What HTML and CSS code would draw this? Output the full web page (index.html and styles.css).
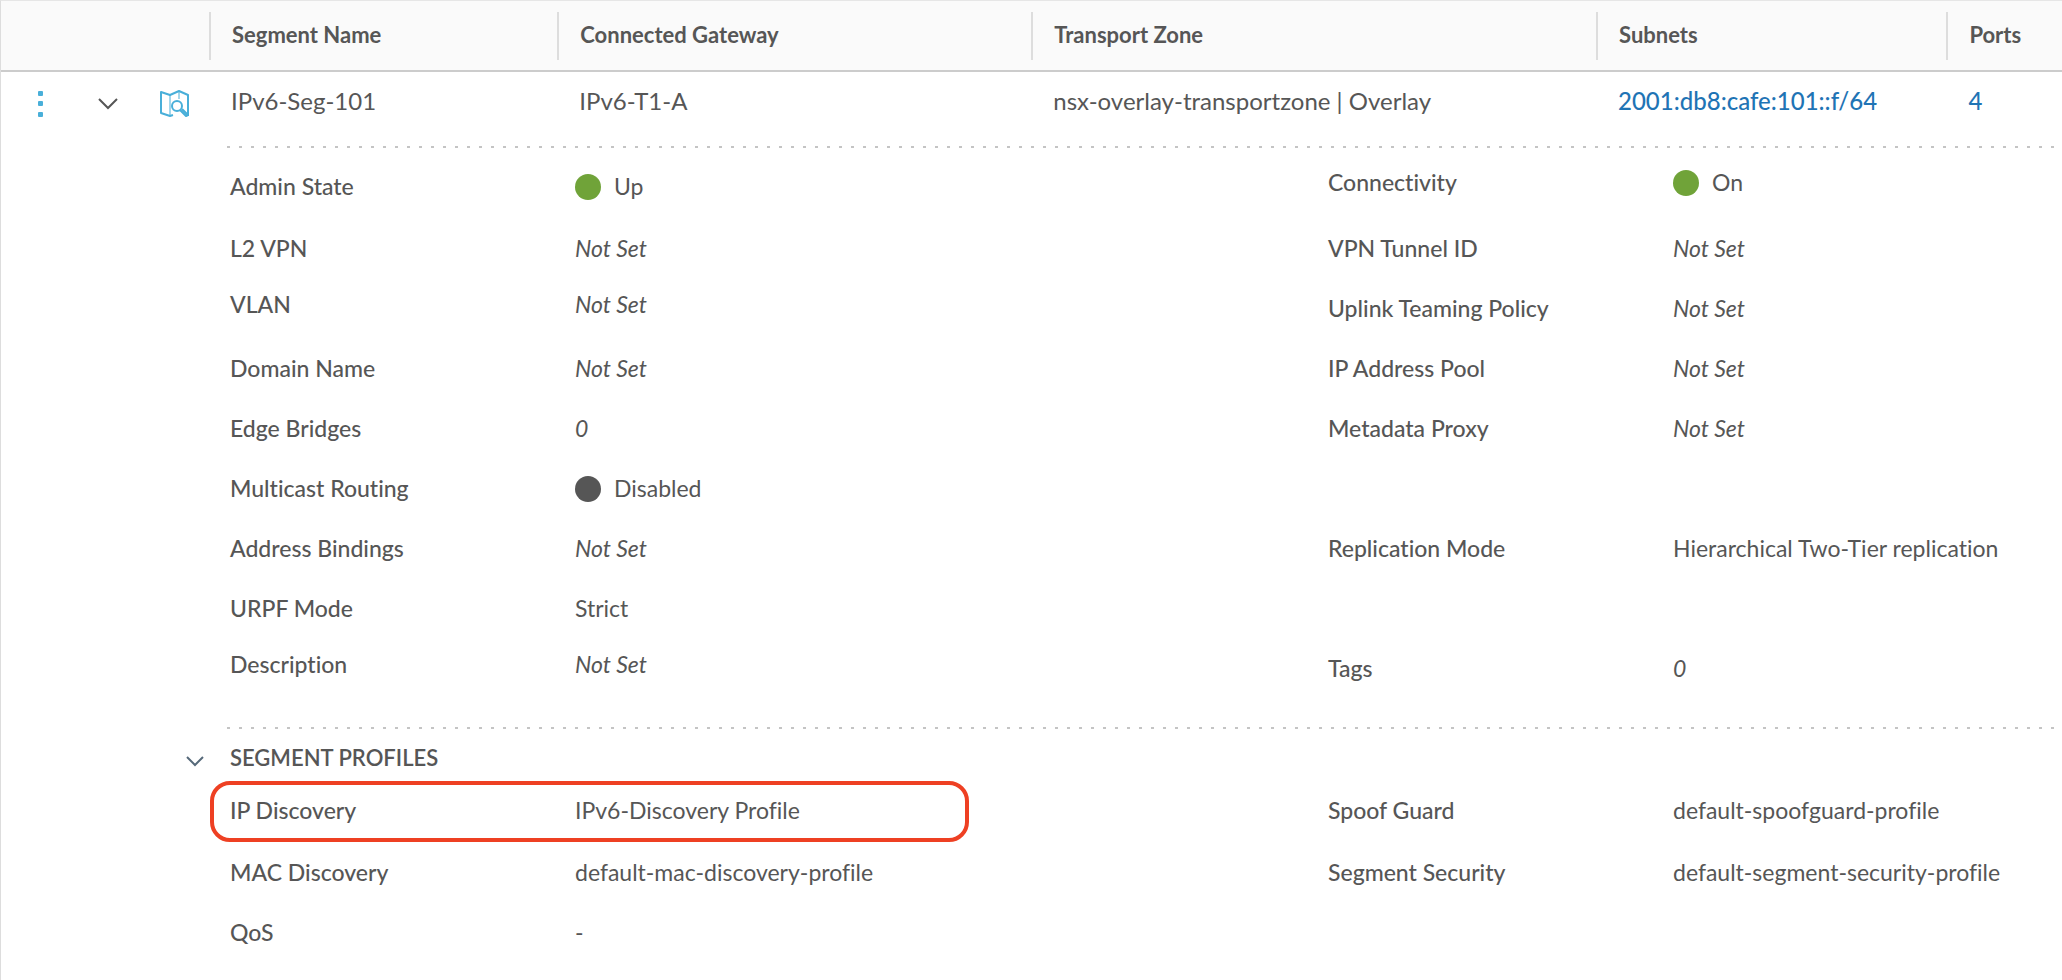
FILE: index.html
```html
<!DOCTYPE html>
<html lang="en">
<head>
    <meta charset="UTF-8">
    <meta name="viewport" content="width=device-width, initial-scale=1.0">
    <title>Segments</title>
    <link rel="stylesheet" href="styles.css">
</head>
<body>
    <table class="segments">
        <colgroup>
            <col class="col-actions">
            <col class="col-name">
            <col class="col-gateway">
            <col class="col-zone">
            <col class="col-subnets">
            <col class="col-ports">
        </colgroup>
        <thead>
            <tr>
                <td></td>
                <th scope="col"><div class="head">Segment Name</div></th>
                <th scope="col"><div class="head">Connected Gateway</div></th>
                <th scope="col"><div class="head">Transport Zone</div></th>
                <th scope="col"><div class="head">Subnets</div></th>
                <th scope="col"><div class="head">Ports</div></th>
            </tr>
        </thead>
        <tbody>
            <tr class="segment">
                <td>
                    <div class="actions">
                        <button type="button" class="icon-btn" aria-label="Actions">
                            <svg width="8" height="28" viewBox="0 0 8 28" fill="#49afd9">
                                <rect x="2" y="1" width="5" height="5" rx="1"/>
                                <rect x="2" y="11" width="5" height="5" rx="1"/>
                                <rect x="2" y="22" width="5" height="5" rx="1"/>
                            </svg>
                        </button>
                        <button type="button" class="icon-btn" aria-label="Collapse segment">
                            <svg width="20" height="14" viewBox="0 0 20 14" fill="none" stroke="#565656" stroke-width="2">
                                <path d="M1 2l9 9 9-9"/>
                            </svg>
                        </button>
                        <svg class="map" width="30" height="28" viewBox="0 0 30 28" fill="none" stroke="#49afd9" stroke-width="2" stroke-linejoin="round">
                            <path d="M13 25l-3 1-9-3V2l9 3 9-4 9 4v21"/>
                            <path d="M10 5v21M19 1v8" stroke-width="1"/>
                            <circle cx="17" cy="16" r="5"/>
                            <path d="M20 20l6 6 2-1-6-6"/>
                        </svg>
                    </div>
                </td>
                <td>IPv6-Seg-101</td>
                <td>IPv6-T1-A</td>
                <td>nsx-overlay-transportzone | Overlay</td>
                <td><a href="#subnets">2001:db8:cafe:101::f/64</a></td>
                <td><a href="#ports">4</a></td>
            </tr>
            <tr>
                <td class="details" colspan="6">
                    <div class="divider"></div>
                    <dl class="settings">
                        <div class="row">
                            <dt>Admin State</dt>
                            <dd><span class="dot green"></span>Up</dd>
                            <dt class="upper">Connectivity</dt>
                            <dd class="upper"><span class="dot green"></span>On</dd>
                        </div>
                        <div class="row">
                            <dt>L2 VPN</dt>
                            <dd class="unset">Not Set</dd>
                            <dt>VPN Tunnel ID</dt>
                            <dd class="unset">Not Set</dd>
                        </div>
                        <div class="row">
                            <dt class="upper">VLAN</dt>
                            <dd class="unset upper">Not Set</dd>
                            <dt>Uplink Teaming Policy</dt>
                            <dd class="unset">Not Set</dd>
                        </div>
                        <div class="row">
                            <dt>Domain Name</dt>
                            <dd class="unset">Not Set</dd>
                            <dt>IP Address Pool</dt>
                            <dd class="unset">Not Set</dd>
                        </div>
                        <div class="row">
                            <dt>Edge Bridges</dt>
                            <dd class="unset">0</dd>
                            <dt>Metadata Proxy</dt>
                            <dd class="unset">Not Set</dd>
                        </div>
                        <div class="row">
                            <dt>Multicast Routing</dt>
                            <dd><span class="dot grey"></span>Disabled</dd>
                        </div>
                        <div class="row">
                            <dt>Address Bindings</dt>
                            <dd class="unset">Not Set</dd>
                            <dt>Replication Mode</dt>
                            <dd>Hierarchical Two-Tier replication</dd>
                        </div>
                        <div class="row">
                            <dt>URPF Mode</dt>
                            <dd>Strict</dd>
                        </div>
                        <div class="row">
                            <dt class="upper">Description</dt>
                            <dd class="unset upper">Not Set</dd>
                            <dt>Tags</dt>
                            <dd class="unset">0</dd>
                        </div>
                    </dl>
                    <div class="divider"></div>
                    <div class="section-title">
                        <button type="button" class="icon-btn" aria-label="Collapse segment profiles">
                            <svg width="18" height="12" viewBox="0 0 18 12" fill="none" stroke="#56697a" stroke-width="2">
                                <path d="M1 2l8 8 8-8"/>
                            </svg>
                        </button>
                        <h2>SEGMENT PROFILES</h2>
                    </div>
                    <dl class="profiles">
                        <div class="row highlighted">
                            <dt>IP Discovery</dt>
                            <dd>IPv6-Discovery Profile</dd>
                            <dt>Spoof Guard</dt>
                            <dd>default-spoofguard-profile</dd>
                        </div>
                        <div class="row">
                            <dt>MAC Discovery</dt>
                            <dd>default-mac-discovery-profile</dd>
                            <dt>Segment Security</dt>
                            <dd>default-segment-security-profile</dd>
                        </div>
                        <div class="row">
                            <dt>QoS</dt>
                            <dd>-</dd>
                        </div>
                    </dl>
                </td>
            </tr>
        </tbody>
    </table>
</body>
</html>
```
FILE: styles.css
```css
*,
*::before {
    margin: 0;
    padding: 0;
    box-sizing: border-box;
}
body {
    min-height: 100vh;
    background: #fff;
    color: #565656;
    font-family: Lato, "Open Sans", sans-serif;
    font-size: 23px;
    font-variant-ligatures: none;
    line-height: 28px;
    border-top: 1px solid #e6e6e6;
    border-left: 1px solid #ddd;
}
.segments {
    width: 100%;
    table-layout: fixed;
    border-collapse: collapse;
}
.col-actions {
    width: 208px;
}
.col-name {
    width: 16.9%;
}
.col-gateway {
    width: 23%;
}
.col-zone {
    width: 27.4%;
}
.col-subnets {
    width: 17%;
}
thead tr {
    background: #fafafa;
    border-bottom: 2px solid #ccc;
}
thead th {
    padding: 11px 0 10px;
    text-align: left;
}
.head {
    height: 48px;
    padding-left: 21px;
    border-left: 2px solid #ddd;
    font-size: 22px;
    font-weight: bold;
    line-height: 46px;
    white-space: nowrap;
}
.segment td {
    height: 75px;
    padding: 0 0 16px 22px;
    font-size: 24px;
    white-space: nowrap;
}
.segment td:first-child {
    padding-left: 0;
}
.segment a {
    color: #1f74b5;
    font-weight: 500;
    text-decoration: none;
}
.actions {
    display: flex;
    align-items: center;
    padding: 6px 0 0 35px;
}
.icon-btn {
    display: flex;
    background: none;
    border: none;
    cursor: pointer;
}
.actions .icon-btn + .icon-btn {
    margin-left: 54px;
}
.map {
    margin-left: 42px;
}
.divider {
    height: 2px;
    margin-left: 226px;
    background: repeating-linear-gradient(90deg, #c4c4c4 0 3px, transparent 3px 12px);
}
.row {
    position: relative;
    display: grid;
    grid-template-columns: 345fr 753fr 345fr 389fr;
    align-items: center;
    min-height: 36px;
    margin-bottom: 24px;
    padding-left: 229px;
}
.row:first-child {
    margin-bottom: 26px;
}
.row .upper {
    align-self: start;
}
dt {
    font-weight: 500;
}
dd {
    display: flex;
    align-items: center;
}
.unset {
    font-style: italic;
}
.dot {
    width: 26px;
    height: 26px;
    margin: 2px 13px 0 0;
    border-radius: 50%;
}
.green {
    background: #70a339;
}
.grey {
    background: #565656;
}
.settings {
    padding: 20px 0 17px;
}
.section-title {
    display: flex;
    align-items: center;
    padding: 15px 0 20px 185px;
}
.section-title .icon-btn {
    padding-top: 6px;
}
.section-title h2 {
    margin-left: 26px;
    font-size: 22px;
    font-weight: 600;
}
.highlighted::before {
    content: "";
    position: absolute;
    top: -11px;
    bottom: -14px;
    left: 209px;
    width: 759px;
    border: 4px solid #ee4023;
    border-radius: 20px;
}
```
